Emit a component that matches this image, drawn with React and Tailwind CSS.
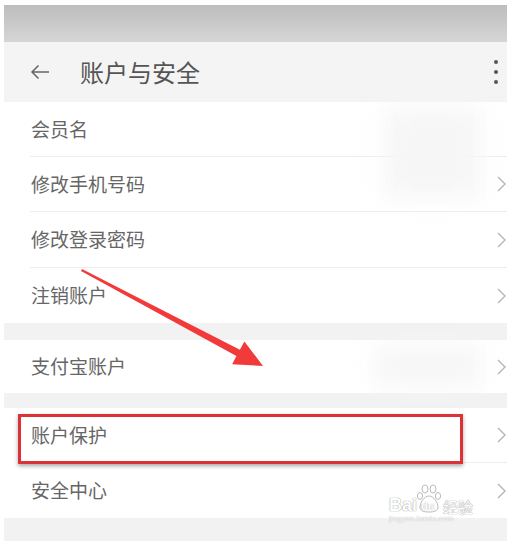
import React from 'react';

// Menu rows, grouped by section
const GROUPS = [
  [
    { label: '会员名', arrow: false },
    { label: '修改手机号码', arrow: true },
    { label: '修改登录密码', arrow: true },
    { label: '注销账户', arrow: true },
  ],
  [{ label: '支付宝账户', arrow: true }],
  [
    { label: '账户保护', arrow: true },
    { label: '安全中心', arrow: true },
  ],
];

const Chevron = () => (
  <svg width="10" height="16" viewBox="0 0 10 16" className="shrink-0">
    <polyline points="1,1 8,8 1,15" fill="none" stroke="#b4b4b4" strokeWidth="1.4" />
  </svg>
);

const Row = ({ item, last, h }) => (
  <div className={`flex items-center pl-[26px] ${h}`}>
    <div className={`flex flex-1 items-center justify-between h-full ${last ? '' : 'border-b border-[#ededed]'}`}>
      <span className="pl-[1px] text-[19px] text-[#666666]">{item.label}</span>
      {item.arrow && <Chevron />}
    </div>
  </div>
);

export default function App() {
  return (
    <div
      className="relative w-[507px] h-[541px] overflow-hidden bg-white pl-[4px] pt-[5px]"
      style={{ fontFamily: '"Noto Sans CJK SC", "Noto Sans", sans-serif' }}
    >
      {/* status bar */}
      <div className="h-[37px] bg-gradient-to-b from-[#bdbdbd] to-[#d6d6d6]" />

      {/* header */}
      <div className="flex items-center h-[60px] bg-[#f4f4f4] pl-[26px] pr-[9px]">
        <svg width="20" height="16" viewBox="0 0 20 16" className="shrink-0">
          <path d="M19 8H2M8.5 1.5L2 8l6.5 6.5" fill="none" stroke="#666" strokeWidth="1.5" />
        </svg>
        <span className="ml-[30px] text-[24px] text-[#555555]">账户与安全</span>
        <div className="ml-auto flex flex-col gap-[6px]">
          <div className="w-[4px] h-[4px] rounded-full bg-[#555]" />
          <div className="w-[4px] h-[4px] rounded-full bg-[#555]" />
          <div className="w-[4px] h-[4px] rounded-full bg-[#555]" />
        </div>
      </div>

      {/* group 1 */}
      <div className="bg-white">
        {GROUPS[0].map((item, i) => (
          <Row key={i} item={item} last={i === GROUPS[0].length - 1} h={i === 2 ? 'h-[56px]' : 'h-[55px]'} />
        ))}
      </div>
      <div className="h-[17px] bg-[#f2f2f2]" />

      {/* group 2 */}
      <div className="bg-white">
        <Row item={GROUPS[1][0]} last h="h-[53px]" />
      </div>
      <div className="h-[15px] bg-[#f2f2f2]" />

      {/* group 3 */}
      <div className="bg-white">
        {GROUPS[2].map((item, i) => (
          <Row key={i} item={item} last={i === GROUPS[2].length - 1} h="h-[55px]" />
        ))}
      </div>
      <div className="h-[30px] bg-[#f2f2f2]" />

      {/* blurred info */}
      <div className="absolute left-[385px] top-[108px] w-[95px] h-[90px] bg-[#f6f6f6] blur-md" />
      <div className="absolute left-[375px] top-[346px] w-[105px] h-[40px] bg-[#f6f6f6] blur-md" />

      {/* red highlight box */}
      <div className="absolute left-[18px] top-[414px] w-[445px] h-[50px] border-[3px] border-[#dc3136] shadow-[0_2px_4px_rgba(0,0,0,0.35)]" />

      {/* red arrow */}
      <svg className="absolute left-0 top-0" width="507" height="541" viewBox="0 0 507 541">
        <polygon
          points="82,269 239.9,349.8 244.4,341.4 263,366 232.2,364.2 236.4,355.9 81,271"
          fill="#f23a3a"
        />
      </svg>

      {/* watermark */}
      <div className="absolute left-[389px] top-[484px] flex flex-col items-start">
        <div className="flex items-end leading-none">
          <span
            className="text-[18px] font-bold text-white"
            style={{ fontFamily: '"Liberation Sans", sans-serif', textShadow: '0 0 1px #999, 0 0 1px #999' }}
          >
            Bai
          </span>
          <div className="relative w-[24px] h-[30px]">
            <svg width="24" height="30" viewBox="0 0 24 30" className="absolute left-0 top-0">
              <g fill="white" stroke="#aaa" strokeWidth="0.8">
                <ellipse cx="8" cy="5" rx="3" ry="4" />
                <ellipse cx="16" cy="5" rx="3" ry="4" />
                <ellipse cx="3" cy="12" rx="2.6" ry="3.4" />
                <ellipse cx="21" cy="12" rx="2.6" ry="3.4" />
                <path d="M12 12c-5 0-9 7-9 11 0 4 4 5 9 5s9-1 9-5c0-4-4-11-9-11z" />
              </g>
            </svg>
            <span
              className="absolute left-[4px] bottom-[2px] text-[11px] font-bold text-white"
              style={{ fontFamily: '"Liberation Sans", sans-serif', textShadow: '0 0 1px #888' }}
            >
              du
            </span>
          </div>
          <span className="ml-[2px] text-[15px] text-white" style={{ textShadow: '0 0 1px #999, 0 0 1px #999' }}>
            经验
          </span>
        </div>
        <span
          className="mt-[1px] text-[8px] leading-none text-white"
          style={{ fontFamily: '"Liberation Sans", sans-serif', textShadow: '0 0 1px #999' }}
        >
          jingyan.baidu.com
        </span>
      </div>
    </div>
  );
}
